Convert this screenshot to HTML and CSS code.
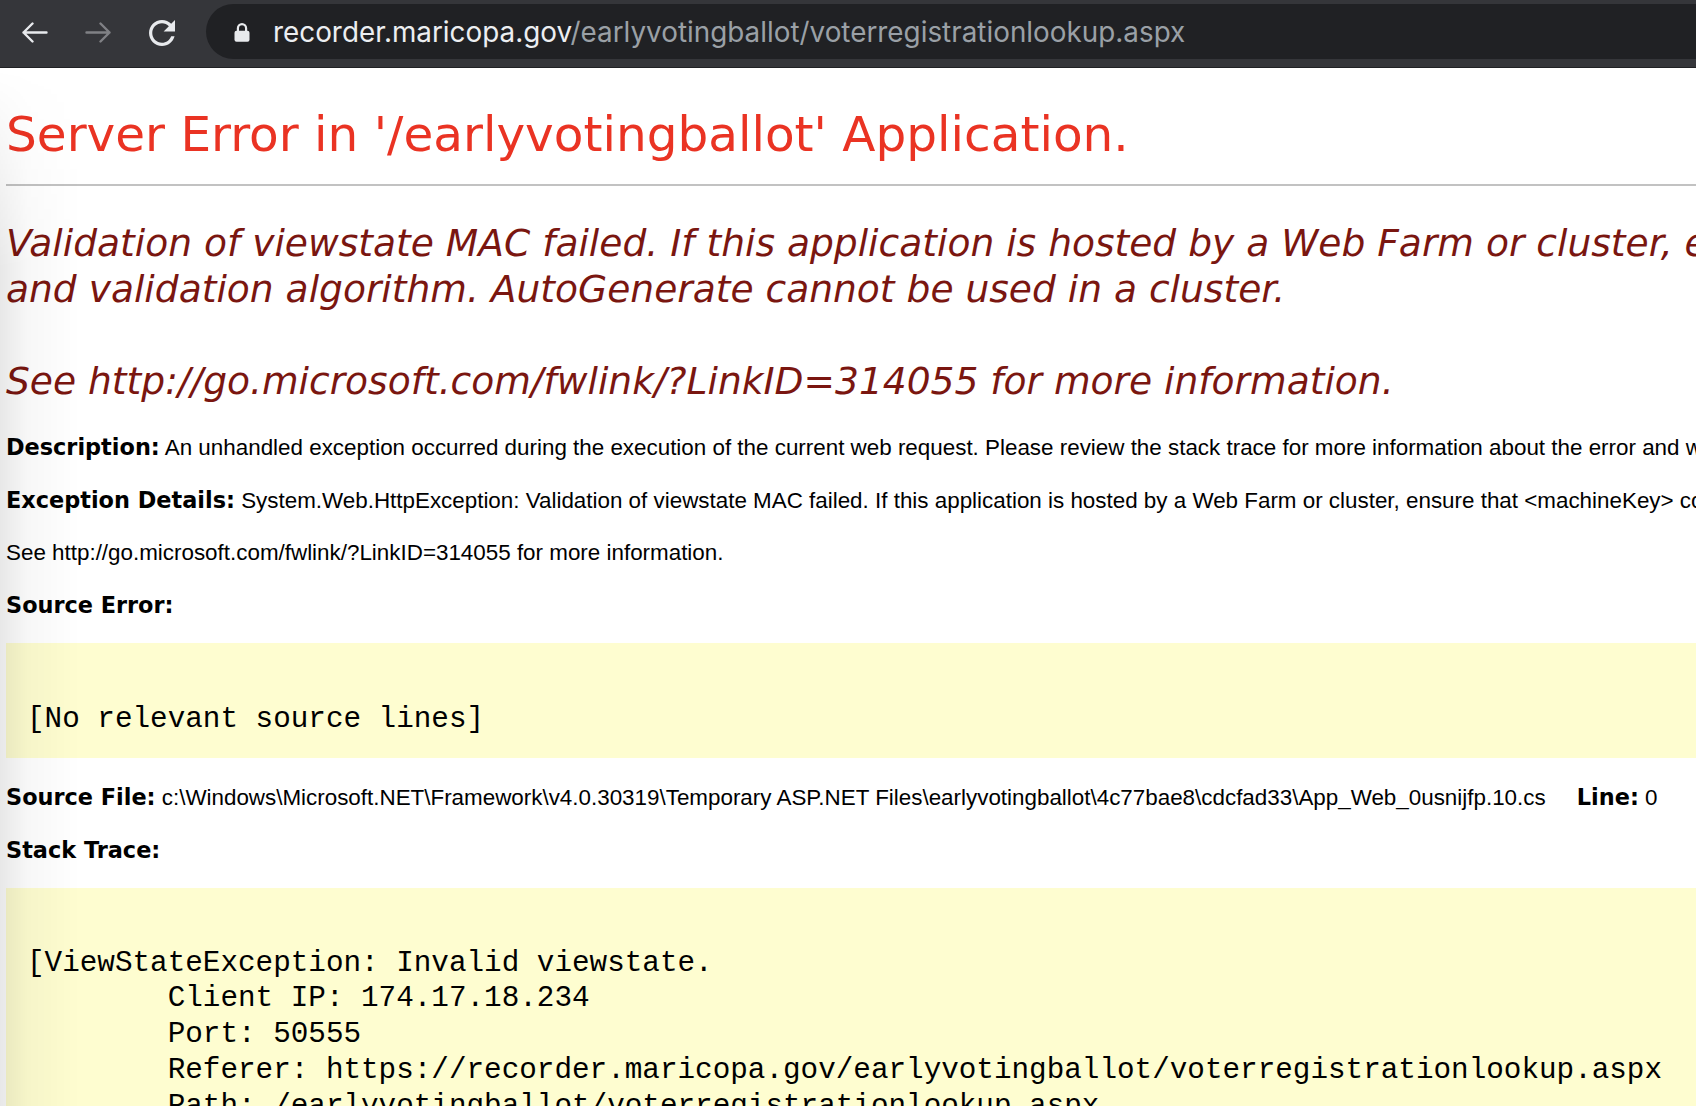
FILE: index.html
```html
<!DOCTYPE html>
<html lang="en">
<head>
<meta charset="utf-8">
<title>Validation of viewstate MAC failed.</title>
<link rel="stylesheet" href="styles.css">
</head>
<body>
<div class="toolbar">
  <div class="navbtn">
    <svg class="arrow" width="27" height="21" viewBox="0 0 27 21"><path d="M25.5 10.5H2.5M11.5 1.5L2.5 10.5L11.5 19.5" fill="none" stroke="#e8eaed" stroke-width="2.4" stroke-linecap="round" stroke-linejoin="round"/></svg>
  </div>
  <div class="navbtn">
    <svg class="arrow" width="27" height="21" viewBox="0 0 27 21"><path d="M1.5 10.5H24.5M15.5 1.5L24.5 10.5L15.5 19.5" fill="none" stroke="#808185" stroke-width="2.4" stroke-linecap="round" stroke-linejoin="round"/></svg>
  </div>
  <div class="navbtn">
    <svg class="reload" width="26" height="26" viewBox="4 4 16 16"><path fill="#e8eaed" d="M17.65 6.35C16.2 4.9 14.21 4 12 4c-4.42 0-7.99 3.58-7.99 8s3.57 8 7.99 8c3.73 0 6.84-2.55 7.73-6h-2.08c-.82 2.33-3.04 4-5.65 4-3.31 0-6-2.69-6-6s2.69-6 6-6c1.66 0 3.14.69 4.22 1.78L13 11h7V4l-2.35 2.35z"/></svg>
  </div>
  <div class="omnibox">
    <svg class="lock" width="16" height="20" viewBox="0 0 16 20"><path d="M3.9 9.5V6.3a4.1 4.1 0 0 1 8.2 0V9.5" fill="none" stroke="#e8eaed" stroke-width="2.2"/><rect x="0.5" y="8.8" width="15" height="11" rx="2" fill="#e8eaed"/></svg>
    <span class="url"><span class="host">recorder.maricopa.gov</span><span class="path">/earlyvotingballot/voterregistrationlookup.aspx</span></span>
  </div>
</div>

<main class="page">
  <h1 class="title">Server Error in '/earlyvotingballot' Application.</h1>
  <hr class="rule">
  <h2 class="subtitle">Validation of viewstate MAC failed. If this application is hosted by a Web Farm or cluster, ensure that &lt;machineKey&gt; configuration specifies the same validationKey<br>and validation algorithm. AutoGenerate cannot be used in a cluster.<br><br>See http://go.microsoft.com/fwlink/?LinkID=314055 for more information.</h2>

  <div class="details">
    <p class="line"><b class="label">Description:</b> An unhandled exception occurred during the execution of the current web request. Please review the stack trace for more information about the error and where it originated in the code.</p>
    <p class="line"><b class="label">Exception Details:</b> System.Web.HttpException: Validation of viewstate MAC failed. If this application is hosted by a Web Farm or cluster, ensure that &lt;machineKey&gt; configuration specifies the same validationKey and validation algorithm. AutoGenerate cannot be used in a cluster.</p>
    <p class="line">See http://go.microsoft.com/fwlink/?LinkID=314055 for more information.</p>
    <p class="line"><b class="label">Source Error:</b></p>

    <div class="codebox srcbox"><code class="code">[No relevant source lines]</code></div>

    <p class="line after-box"><b class="label">Source File:</b> c:\Windows\Microsoft.NET\Framework\v4.0.30319\Temporary ASP.NET Files\earlyvotingballot\4c77bae8\cdcfad33\App_Web_0usnijfp.10.cs<b class="label"> &nbsp;&nbsp; Line:</b> 0</p>
    <p class="line"><b class="label">Stack Trace:</b></p>

    <div class="codebox tracebox"><pre class="trace">[ViewStateException: Invalid viewstate.
        Client IP: 174.17.18.234
        Port: 50555
        Referer: https://recorder.maricopa.gov/earlyvotingballot/voterregistrationlookup.aspx
        Path: /earlyvotingballot/voterregistrationlookup.aspx
        User-Agent: Mozilla/5.0 (Macintosh; Intel Mac OS X 10_15_7)
        ViewState: /wEPDwUKLTY0NjE2MzE4Ng9kFgICAw9kFgICAQ8PFgIeBFRleHQFJ]</pre></div>
  </div>
</main>
<div class="shade"></div>
</body>
</html>
```
FILE: styles.css
```css
* {
  box-sizing: border-box;
}

html,
body {
  margin: 0;
  padding: 0;
}

body {
  position: relative;
  width: 1696px;
  height: 1106px;
  overflow: hidden;
  background: #ffffff;
  color: #000000;
  font-family: "Liberation Sans", Arial, sans-serif;
}

/* ---------- browser toolbar ---------- */
.toolbar {
  display: flex;
  align-items: flex-start;
  gap: 24px;
  height: 68px;
  padding: 4px 0 0 14px;
  background: #35363a;
  border-bottom: 1px solid #202124;
}

.navbtn {
  flex: none;
  width: 40px;
  height: 55px;
  display: flex;
  align-items: center;
  justify-content: center;
}

.navbtn svg {
  display: block;
  margin-top: 2px;
}

.omnibox {
  flex: 1;
  height: 55px;
  display: flex;
  align-items: center;
  padding-left: 28px;
  background: #202124;
  border-radius: 28px 0 0 28px;
  white-space: nowrap;
  overflow: hidden;
}

.lock {
  display: block;
  flex: none;
  margin-top: 1px;
}

.url {
  margin-left: 23px;
  font-family: Inter, "Noto Sans", sans-serif;
  font-size: 27.85px;
}

.host {
  color: #eceef1;
}

.path {
  color: #9aa0a6;
}

/* ---------- error page ---------- */
.page {
  padding-left: 6px;
  white-space: nowrap;
}

.title {
  margin: 37px 0 0;
  font-family: "DejaVu Sans", Verdana, sans-serif;
  font-weight: normal;
  font-size: 48.5px;
  line-height: 58px;
  color: #ea3323;
}

.rule {
  margin: 21px 0 0;
  height: 2px;
  border: 0;
  background: #c2c2c2;
}

.subtitle {
  margin: 34px 0 0;
  font-family: "DejaVu Sans", Verdana, sans-serif;
  font-weight: normal;
  font-style: italic;
  font-size: 37.6px;
  line-height: 46px;
  color: #7a1610;
}

.details {
  margin-top: 30px;
  font-size: 22.4px;
  line-height: 26px;
}

.line {
  margin: 0 0 26px;
}

.after-box {
  margin-top: 26px;
}

.label {
  font-family: "DejaVu Sans", Verdana, sans-serif;
  font-weight: bold;
}

.codebox {
  background: #fefdd0;
  padding-left: 21px;
}

.srcbox {
  margin-top: -2px;
  padding-top: 60px;
  padding-bottom: 22px;
}

.code {
  display: block;
  font-family: "Liberation Mono", "Courier New", monospace;
  font-size: 29.3px;
  line-height: 33px;
}

.tracebox {
  margin-top: -2px;
  padding-top: 57.5px;
  padding-bottom: 20px;
}

.trace {
  margin: 0;
  font-family: "Liberation Mono", "Courier New", monospace;
  font-size: 29.3px;
  line-height: 35.8px;
}

/* soft screenshot shading along the left edge */
.shade {
  position: absolute;
  left: 0;
  top: 69px;
  bottom: 0;
  width: 80px;
  background: linear-gradient(to right, rgba(0, 0, 0, 0.09), rgba(0, 0, 0, 0.03) 35%, rgba(0, 0, 0, 0));
  -webkit-mask-image: linear-gradient(to bottom, transparent 0, #000 200px);
  mask-image: linear-gradient(to bottom, transparent 0, #000 200px);
  pointer-events: none;
}
```
